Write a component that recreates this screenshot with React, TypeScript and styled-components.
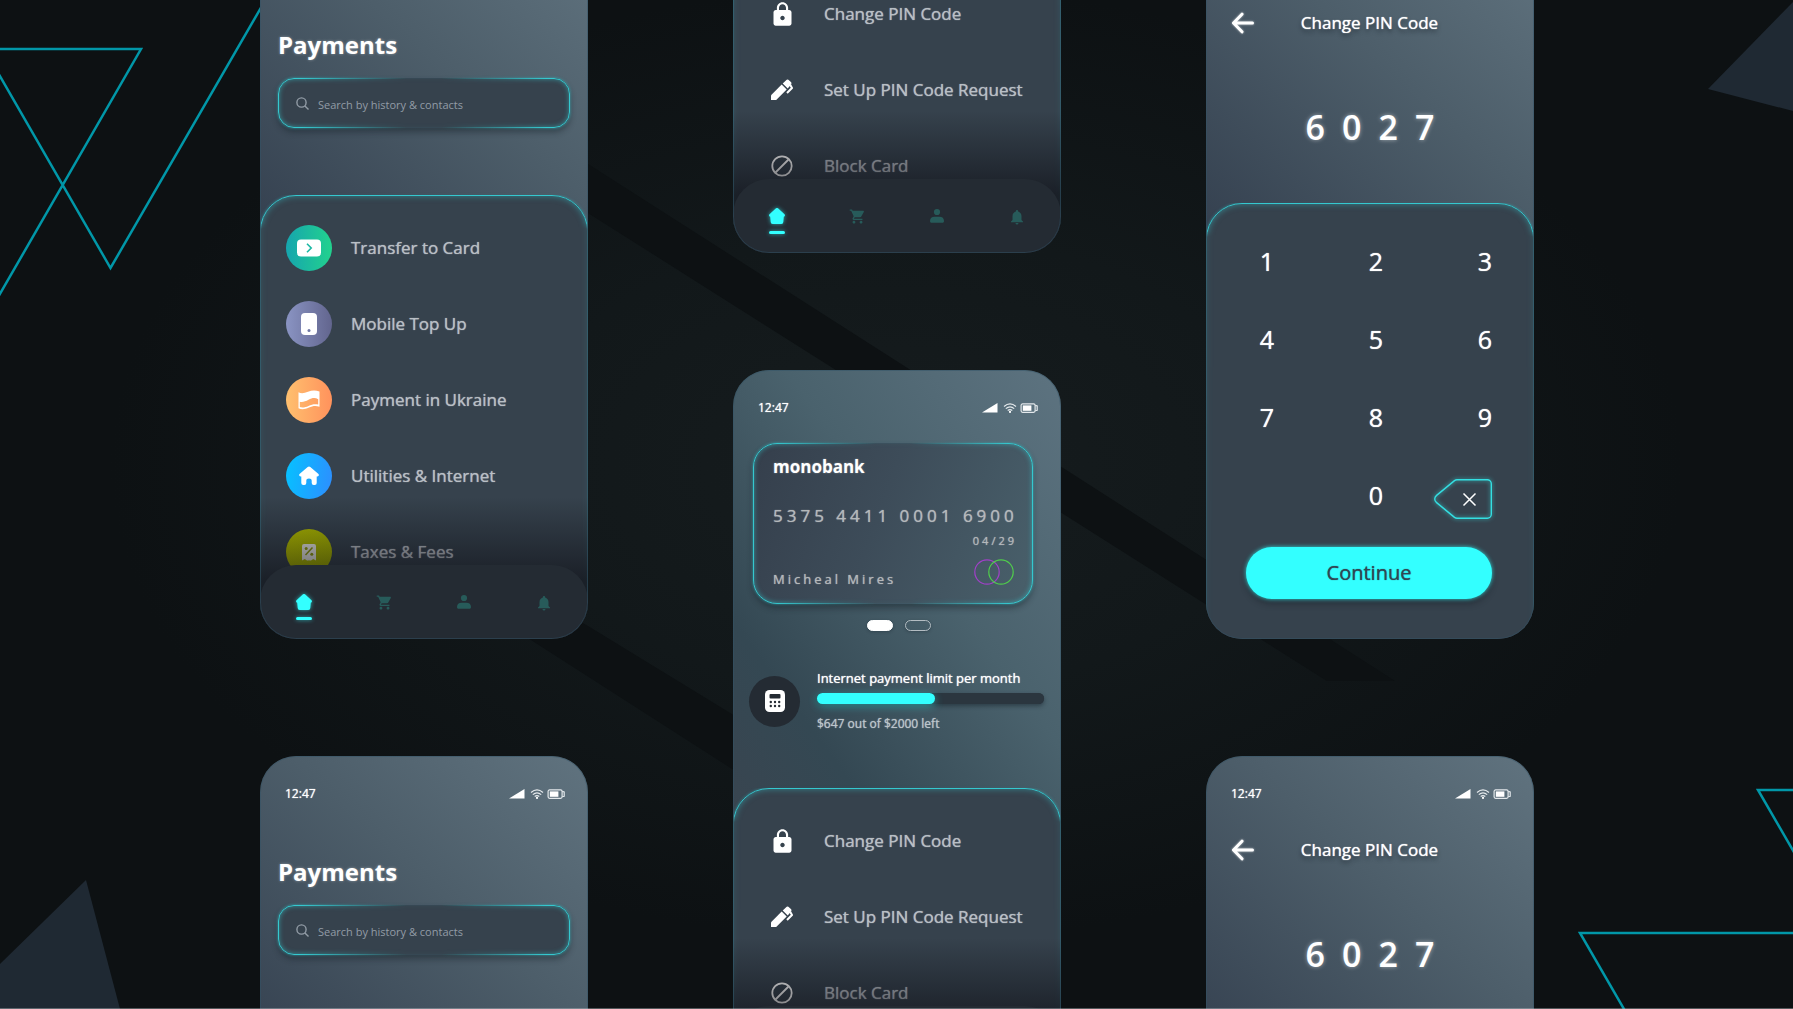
import React from "react";
import styled, { createGlobalStyle, css } from "styled-components";
import { MdLock, MdNotifications, MdShoppingCart } from "react-icons/md";

const theme = {
  cyan: "#33ffff",
  line: "#35c8cf",
  panel: "#36424d",
  nav: "#242b33",
  muted: "#b9bfc5",
  decor: "#0197a8",
  solid: "#1f2933",
};

const GlobalStyle = createGlobalStyle`
  * { box-sizing: border-box; }
  body {
    margin: 0;
    background: #0d1113;
    font-family: "Open Sans", "Noto Sans", sans-serif;
    color: #fff;
  }
  button, input { font: inherit; color: inherit; }
  h1, h2, p, ul { margin: 0; padding: 0; }
`;

/* ---------- board ---------- */

const Board = styled.main`
  position: relative;
  height: 100vh;
  overflow: hidden;
  background: radial-gradient(ellipse at 50% 46%, #161c1e 0%, #12181a 30%, #0d1113 62%);
  &::after {
    content: "";
    position: absolute;
    inset: auto 0 0;
    height: 1px;
    background: rgba(190, 195, 200, 0.4);
  }
`;

const Decor = styled.svg<{ $corner: "tl" | "tr" | "bl" | "br" | "mid" }>`
  position: absolute;
  overflow: visible;
  ${({ $corner }) =>
    ({
      tl: css`top: 0; left: 0;`,
      tr: css`top: 0; right: 0;`,
      bl: css`bottom: 0; left: 0;`,
      br: css`bottom: 0; right: 0;`,
      mid: css`top: 0; left: 0; width: 100%; height: 100%;`,
    })[$corner]}
`;

const Columns = styled.div`
  position: relative;
  display: flex;
  justify-content: center;
  gap: 145px;
  padding-left: 1px;
`;

const Column = styled.div<{ $lift: number }>`
  display: flex;
  flex-direction: column;
  gap: 117px;
  margin-top: ${({ $lift }) => -$lift}px;
`;

/* soft halo that gives regular text a medium weight */
const mediumText = css`
  font-weight: 400;
  text-shadow: 0 0 1px currentColor;
`;

/* ---------- phone ---------- */

const Phone = styled.section<{ $tone?: "slate" | "teal" }>`
  position: relative;
  display: flex;
  flex-direction: column;
  flex: none;
  width: 328px;
  height: 710px;
  overflow: hidden;
  border-radius: 36px;
  background: ${({ $tone }) =>
    $tone === "teal"
      ? "linear-gradient(to top right, #394550 0%, #344853 22%, #4a626d 58%, #5d7380 100%) top / 100% 450px no-repeat, #36424d"
      : "linear-gradient(to top right, #354150 0%, #4d5e6a 55%, #60737f 100%) top / 100% 300px no-repeat, #36424d"};
  &::after {
    content: "";
    position: absolute;
    inset: 0;
    border: 1px solid rgba(50, 84, 104, 0.5);
    border-radius: inherit;
    pointer-events: none;
  }
`;

const StatusBar = styled.div`
  display: flex;
  align-items: center;
  justify-content: space-between;
  height: 16px;
  margin-top: 30px;
  padding: 0 23px 0 25px;
  font-size: 12px;
  line-height: 16px;
  ${mediumText}
`;

const StatusIcons = styled.svg`
  display: block;
`;

const Panel = styled.div`
  position: relative;
  flex: 1;
  padding-top: 30px;
  border-radius: 36px 36px 0 0;
  background: ${theme.panel};
  &::before {
    content: "";
    position: absolute;
    inset: 0 0 -40px;
    border: 1px solid ${theme.line};
    border-radius: inherit;
    box-shadow: inset 0 0 6px rgba(53, 200, 207, 0.5), 0 0 3px rgba(53, 200, 207, 0.5);
    mask: linear-gradient(#000 28px, rgba(0, 0, 0, 0.3) 34px, rgba(0, 0, 0, 0.12)) no-clip;
    pointer-events: none;
  }
`;

const Fade = styled.div`
  position: absolute;
  inset: auto 0 0;
  height: 142px;
  background: linear-gradient(rgba(8, 8, 14, 0), rgba(8, 8, 14, 0.6) 84px);
  pointer-events: none;
`;

const glowFrame = css`
  position: relative;
  box-shadow: 0 4px 6px rgba(20, 28, 36, 0.45);
  &::before {
    content: "";
    position: absolute;
    inset: 0;
    border: 1px solid ${theme.line};
    border-radius: inherit;
    box-shadow: inset 0 0 5px rgba(53, 200, 207, 0.6), 0 0 3px rgba(53, 200, 207, 0.7);
    mask: linear-gradient(to right, #000 8%, rgba(0, 0, 0, 0.05) 44%, rgba(0, 0, 0, 0.05) 56%, #000 92%) no-clip;
    pointer-events: none;
  }
`;

/* ---------- menu ---------- */

const MenuList = styled.ul`
  display: flex;
  flex-direction: column;
  gap: 30px;
  list-style: none;
`;

const MenuButton = styled.button`
  display: flex;
  align-items: center;
  gap: 19px;
  width: 100%;
  height: 46px;
  padding: 0 0 0 26px;
  border: 0;
  background: none;
  color: ${theme.muted};
  font-size: 17px;
  line-height: 24px;
  ${mediumText}
  text-align: left;
  white-space: nowrap;
  cursor: pointer;
`;

const IconDisc = styled.span<{ $fill?: string }>`
  display: grid;
  place-items: center;
  flex: none;
  width: 46px;
  height: 46px;
  border-radius: 50%;
  background: ${({ $fill }) => $fill ?? "none"};
  color: #fff;
`;

const TabBar = styled.nav`
  position: absolute;
  inset: auto 0 0;
  display: flex;
  justify-content: space-between;
  height: 74px;
  padding: 29px 36px 0;
  border-radius: 36px;
  background: ${theme.nav};
`;

const Tab = styled.a<{ $active?: boolean }>`
  display: flex;
  flex-direction: column;
  align-items: center;
  gap: 7px;
  width: 16px;
  height: 26px;
  color: ${({ $active }) => ($active ? theme.cyan : "#275b5a")};
  filter: ${({ $active }) => ($active ? "drop-shadow(0 0 2px rgba(51, 255, 255, 0.6))" : "none")};
  svg { display: block; flex: none; }
  &::after {
    content: "";
    display: ${({ $active }) => ($active ? "block" : "none")};
    flex: none;
    width: 16px;
    height: 3px;
    border-radius: 2px;
    background: currentColor;
  }
`;

/* ---------- payments ---------- */

const PaymentsHeader = styled.header`
  height: 220px;
  padding: 53px 18px 0;
`;

const PageTitle = styled.h1`
  font-size: 24px;
  line-height: 34px;
  font-weight: 700;
  text-shadow: 0 0 3px rgba(255, 255, 255, 0.4);
`;

const SearchBox = styled.label`
  ${glowFrame}
  display: flex;
  align-items: center;
  gap: 9px;
  height: 50px;
  margin-top: 16px;
  padding: 0 18px;
  border-radius: 16px;
  background: ${theme.panel};
  color: #929ca6;
  svg { flex: none; }
`;

const SearchInput = styled.input`
  flex: 1;
  min-width: 0;
  padding: 3px 0 0;
  border: 0;
  outline: 0;
  background: none;
  font-size: 11px;
  line-height: 16px;
  &::placeholder { color: #929ca6; opacity: 1; }
`;

/* ---------- card ---------- */

const CardHeader = styled.header`
  height: 372px;
  padding: 27px 17px 0 16px;
`;

const BankCard = styled.article`
  ${glowFrame}
  display: grid;
  grid-template-columns: 1fr auto;
  grid-template-rows: 43px 34px 22px 1fr;
  height: 161px;
  margin: 0 11px 0 4px;
  padding: 10px 16px 15px 20px;
  border-radius: 24px;
  background: linear-gradient(110deg, #353f4c 0%, #3d4c59 45%, #49606b 100%);
`;

const BankName = styled.h2`
  grid-column: 1 / -1;
  font-size: 17px;
  line-height: 28px;
  font-weight: 700;
  text-shadow: 0 0 2px rgba(255, 255, 255, 0.4);
`;

const CardNumber = styled.p`
  grid-column: 1 / -1;
  color: #b4b8bb;
  font-size: 17px;
  line-height: 40px;
  letter-spacing: 4px;
  white-space: nowrap;
  ${mediumText}
`;

const Expiry = styled.p`
  grid-column: 2;
  justify-self: end;
  align-self: center;
  color: #b4b8bb;
  font-size: 11px;
  line-height: 16px;
  letter-spacing: 3px;
  ${mediumText}
`;

const Holder = styled.p`
  grid-row: 4;
  align-self: end;
  color: #b4b8bb;
  font-size: 13px;
  line-height: 20px;
  letter-spacing: 3px;
  ${mediumText}
`;

const Rings = styled.svg`
  grid-row: 4;
  align-self: end;
  justify-self: end;
  margin: 0 3px 4px 0;
`;

const Pager = styled.div`
  display: flex;
  justify-content: center;
  gap: 12px;
  margin-top: 16px;
  padding-left: 4px;
`;

const PageDot = styled.button<{ $active?: boolean }>`
  width: 26px;
  height: 11px;
  padding: 0;
  border: 1px solid ${({ $active }) => ($active ? "#fff" : "#b3bcc2")};
  border-radius: 6px;
  background: ${({ $active }) => ($active ? "#fff" : "transparent")};
  box-shadow: 0 1px 3px rgba(20, 30, 40, 0.3);
  cursor: pointer;
`;

const Limit = styled.div`
  display: flex;
  align-items: center;
  gap: 17px;
  margin-top: 38px;
`;

const LimitDisc = styled.span`
  display: grid;
  place-items: center;
  flex: none;
  width: 51px;
  height: 51px;
  border-radius: 50%;
  background: ${theme.nav};
`;

const LimitBody = styled.label`
  display: flex;
  flex: 1;
  flex-direction: column;
  font-size: 13px;
  line-height: 18px;
  ${mediumText}
  white-space: nowrap;
`;

const LimitBar = styled.progress`
  display: block;
  width: 100%;
  height: 11px;
  margin: 6px 0 11px;
  border: 0;
  border-radius: 6px;
  appearance: none;
  background: #2b363f;
  box-shadow: 0 2px 4px rgba(20, 30, 38, 0.5);
  &::-webkit-progress-bar {
    border-radius: 6px;
    background: #2b363f;
  }
  &::-webkit-progress-value {
    border-radius: 6px;
    background: ${theme.cyan};
    box-shadow: 0 2px 8px rgba(51, 255, 255, 0.45);
  }
`;

const LimitNote = styled.span`
  color: #bcc5cb;
  font-size: 12px;
`;

/* ---------- pin ---------- */

const PinHeader = styled.header`
  height: 228px;
  padding-top: 35px;
`;

const PinTitleRow = styled.div`
  display: grid;
  grid-template-columns: 24px 1fr 24px;
  align-items: center;
  height: 26px;
  padding: 0 26px 0 25px;
`;

const BackButton = styled.button`
  display: grid;
  padding: 0;
  border: 0;
  background: none;
  filter: drop-shadow(0 0 1px rgba(255, 255, 255, 0.6));
  cursor: pointer;
`;

const PinTitle = styled.h2`
  font-size: 17px;
  line-height: 26px;
  font-weight: 400;
  text-align: center;
  text-shadow: 0 0 1px currentColor, 0 3px 4px rgba(20, 28, 36, 0.6);
`;

const PinDigits = styled.output`
  display: flex;
  justify-content: center;
  gap: 17px;
  margin-top: 66px;
  font-size: 34px;
  line-height: 50px;
  font-weight: 600;
  text-shadow: 0 0 4px rgba(255, 255, 255, 0.5);
`;

const Keypad = styled.div`
  display: grid;
  grid-template-columns: repeat(3, 58px);
  column-gap: 51px;
  row-gap: 38px;
  padding: 8px 42px 0 10px;
`;

const Key = styled.button<{ $column?: number }>`
  grid-column: ${({ $column }) => $column ?? "auto"};
  height: 40px;
  padding: 0;
  border: 0;
  background: none;
  font-size: 25px;
  line-height: 40px;
  ${mediumText}
  text-align: right;
  cursor: pointer;
  svg { display: block; margin-top: 4px; overflow: visible; }
`;

const Continue = styled.button`
  display: block;
  width: calc(100% - 82px);
  height: 52px;
  margin: 32px 42px 0 40px;
  padding: 0;
  border: 0;
  border-radius: 26px;
  background: ${theme.cyan};
  box-shadow: 0 0 4px rgba(51, 255, 255, 0.8), 0 5px 6px rgba(20, 26, 32, 0.4);
  color: #2f4754;
  font-size: 20px;
  line-height: 52px;
  ${mediumText}
  cursor: pointer;
`;

/* ---------- icons ---------- */

const CardIcon = () => (
  <svg width="24" height="18" viewBox="0 0 24 18">
    <rect x="0" y="0.5" width="24" height="17" rx="4" fill="#fff" />
    <path d="M10 4.800 14.200 9 10 13.200" fill="none" stroke="#1cb8a4" strokeWidth="1.600" />
  </svg>
);
const MobileIcon = () => (
  <svg width="16" height="22" viewBox="0 0 16 22">
    <rect width="16" height="22" rx="4" fill="#fff" />
    <circle cx="8" cy="17.500" r="1.500" fill="#6f77a5" />
  </svg>
);
const FlagIcon = () => (
  <svg width="22" height="20" viewBox="0 0 22 20">
    <path
      fill="#fff"
      fillRule="evenodd"
      d="M.5 2.2C3 3.6 6 3.4 10 1.8 14 .2 17.500 0 21.500 1.600V16.800C17.500 15.400 14.500 16 11 17.600 7 19.400 3.500 19.600.5 18.300ZM1.800 11.800V17C4.500 17.800 7.500 17.300 10.500 15.900 14 14.300 17 13.800 20.200 14.600V9.200C17 7.400 14 7.800 10.500 9.800 7.500 11.500 4.500 12.500 1.800 11.800Z"
    />
  </svg>
);
const HouseIcon = () => (
  <svg width="20" height="20" viewBox="0 0 20 20">
    <path
      fill="#fff"
      d="M8.700 1.100a2 2 0 0 1 2.600 0l7.900 6.700c1.200 1 .6 2.600-.9 2.600h-.6v6.700a2 2 0 0 1-2 2h-1a2 2 0 0 1-2-2v-2.300c0-1.500-1-2.300-2.700-2.300s-2.700.8-2.700 2.300v2.300a2 2 0 0 1-2 2h-1a2 2 0 0 1-2-2v-6.700h-.6c-1.500 0-2.100-1.600-.9-2.600Z"
    />
  </svg>
);
const TaxIcon = () => (
  <svg width="14" height="17" viewBox="0 0 14 17">
    <path fill="#e9e9e4" d="M2 0h10a2 2 0 0 1 2 2v14.500l-2.800-1.600L9 16.500H7.500L7 16l-.5.500H5l-2.200-1.600L0 16.500V2a2 2 0 0 1 2-2Z" />
    <path d="m3.500 11 7-7.500" stroke="#8f9a10" strokeWidth="1.500" />
    <circle cx="4.200" cy="4.500" r="1.500" fill="#8f9a10" />
    <circle cx="9.800" cy="10.200" r="1.500" fill="#8f9a10" />
  </svg>
);
const PenIcon = () => (
  <svg width="22" height="22" viewBox="0 0 22 22">
    <path fill="#fff" d="M0 16.300 10.700 5.600l5 5L5.200 21H0Z" />
    <path fill="#fff" d="m11.700 4.600 3.200-3.200a2.300 2.300 0 0 1 3.300 0l1.700 1.700c.7.700.7 1.600.2 2.400l-3.400 4Z" />
    <path d="m19.300 6 1.700 3-5 5" fill="none" stroke="#fff" strokeWidth="2" strokeLinejoin="round" />
  </svg>
);
const BlockIcon = () => (
  <svg width="22" height="22" viewBox="0 0 22 22" fill="none" stroke="#fff" strokeWidth="1.800">
    <circle cx="11" cy="11" r="9.700" />
    <path d="m4.500 17.500 13-13" />
  </svg>
);
const CalculatorIcon = () => (
  <svg width="20" height="22" viewBox="0 0 20 22">
    <rect width="20" height="22" rx="4.500" fill="#fff" />
    <rect x="4.500" y="4" width="11" height="4.500" rx="1" fill={theme.nav} />
    {[12, 16].map((y) =>
      [5.8, 10, 14.2].map((x) => <circle key={`${x}-${y}`} cx={x} cy={y} r="1.200" fill={theme.nav} />)
    )}
  </svg>
);
const TabHome = () => (
  <svg width="16" height="16" viewBox="0 0 16 16">
    <path fill="currentColor" d="M6.700.6a1.800 1.800 0 0 1 2.600 0l6.200 5.700c.8.800.5 2.200-.7 2.500l-.5 5.200a2 2 0 0 1-2 2H3.700a2 2 0 0 1-2-2l-.5-5.200C0 8.500-.3 7.100.5 6.300Z" />
  </svg>
);
const TabPerson = () => (
  <svg width="14" height="16" viewBox="0 0 14 16">
    <circle cx="7" cy="4" r="3.100" fill="currentColor" />
    <path fill="currentColor" d="M0 13c0-2.800 1.800-4.300 4.500-4.300h5C12.200 8.700 14 10.200 14 13c0 1.200-.6 1.800-1.700 1.800H1.700C.6 14.800 0 14.200 0 13Z" />
  </svg>
);
const SearchIcon = () => (
  <svg width="13" height="13" viewBox="0 0 13 13" fill="none" stroke="currentColor" strokeWidth="1.400">
    <circle cx="5.500" cy="5.500" r="4.600" />
    <path d="m8.900 8.900 3.600 3.600" />
  </svg>
);

/* ---------- screens ---------- */

const Status = () => (
  <StatusBar>
    <span>12:47</span>
    <StatusIcons width="56" height="10" viewBox="0 0 56 10" aria-label="Signal, Wi-Fi and battery">
      <path d="M0 9.500 15.500 0v9.500Z" fill="#fff" />
      <g fill="none" stroke="#e3e8eb" strokeWidth="1.200">
        <path d="M22 3.500q6-5.200 12 0M23.800 5.600q4.200-3.600 8.400 0M25.700 7.500q2.300-1.800 4.600 0" />
        <rect x="39.100" y="0.900" width="14" height="8.400" rx="1.500" />
        <path d="M53.200 2.400 55.200 3v4.200l-2 .6" />
      </g>
      <circle cx="28" cy="8.900" r="1.100" fill="#fff" />
      <rect x="40.800" y="2.400" width="8.600" height="5.400" fill="#fff" />
    </StatusIcons>
  </StatusBar>
);

const Tabs = () => (
  <TabBar aria-label="Main">
    <Tab href="#home" aria-label="Home" $active><TabHome /></Tab>
    <Tab href="#shop" aria-label="Shop"><MdShoppingCart size={17} /></Tab>
    <Tab href="#profile" aria-label="Profile"><TabPerson /></Tab>
    <Tab href="#alerts" aria-label="Alerts"><MdNotifications size={18} /></Tab>
  </TabBar>
);

type Item = { label: string; icon: React.ReactNode; fill?: string };

const paymentItems: Item[] = [
  { label: "Transfer to Card", icon: <CardIcon />, fill: "linear-gradient(90deg, #16a5ae, #22d28e)" },
  { label: "Mobile Top Up", icon: <MobileIcon />, fill: "linear-gradient(90deg, #8a94c3, #62658e)" },
  { label: "Payment in Ukraine", icon: <FlagIcon />, fill: "linear-gradient(90deg, #ffc06f, #ff925c)" },
  { label: "Utilities & Internet", icon: <HouseIcon />, fill: "linear-gradient(100deg, #05c3ff, #2e8dff)" },
  { label: "Taxes & Fees", icon: <TaxIcon />, fill: "linear-gradient(120deg, #b4be00, #a3b000)" },
];

const cardItems: Item[] = [
  { label: "Change PIN Code", icon: <MdLock size={27} /> },
  { label: "Set Up PIN Code Request", icon: <PenIcon /> },
  { label: "Block Card", icon: <BlockIcon /> },
];

const Menu = ({ items }: { items: Item[] }) => (
  <MenuList>
    {items.map(({ label, icon, fill }) => (
      <li key={label}>
        <MenuButton type="button">
          <IconDisc $fill={fill}>{icon}</IconDisc>
          {label}
        </MenuButton>
      </li>
    ))}
  </MenuList>
);

const PaymentsScreen = () => (
  <Phone>
    <Status />
    <PaymentsHeader>
      <PageTitle>Payments</PageTitle>
      <SearchBox>
        <SearchIcon />
        <SearchInput type="search" placeholder="Search by history & contacts" aria-label="Search by history & contacts" />
      </SearchBox>
    </PaymentsHeader>
    <Panel>
      <Menu items={paymentItems} />
    </Panel>
    <Fade />
    <Tabs />
  </Phone>
);

const CardScreen = () => (
  <Phone $tone="teal">
    <Status />
    <CardHeader>
      <BankCard>
        <BankName>monobank</BankName>
        <CardNumber>5375 4411 0001 6900</CardNumber>
        <Expiry>04/29</Expiry>
        <Holder>Micheal Mires</Holder>
        <Rings width="40" height="26" viewBox="0 0 40 26" fill="none" strokeWidth="1.200" aria-hidden="true">
          <circle cx="13" cy="13" r="12.200" stroke="#a040c8" />
          <circle cx="27" cy="13" r="12.200" stroke="#50cc4c" />
        </Rings>
      </BankCard>
      <Pager>
        <PageDot type="button" aria-label="Card 1" $active />
        <PageDot type="button" aria-label="Card 2" />
      </Pager>
      <Limit>
        <LimitDisc><CalculatorIcon /></LimitDisc>
        <LimitBody>
          Internet payment limit per month
          <LimitBar value={52} max={100} />
          <LimitNote>$647 out of $2000 left</LimitNote>
        </LimitBody>
      </Limit>
    </CardHeader>
    <Panel>
      <Menu items={cardItems} />
    </Panel>
    <Fade />
    <Tabs />
  </Phone>
);

const PinScreen = () => (
  <Phone>
    <Status />
    <PinHeader>
      <PinTitleRow>
        <BackButton type="button" aria-label="Back">
          <svg width="24" height="22" viewBox="0 0 24 22" fill="none" stroke="#fff" strokeWidth="3" strokeLinecap="round" strokeLinejoin="round">
            <path d="M21.500 11H3M11 2.200 2.500 11l8.500 8.800" />
          </svg>
        </BackButton>
        <PinTitle>Change PIN Code</PinTitle>
      </PinTitleRow>
      <PinDigits>
        {["6", "0", "2", "7"].map((digit, i) => (
          <span key={i}>{digit}</span>
        ))}
      </PinDigits>
    </PinHeader>
    <Panel>
      <Keypad>
        {["1", "2", "3", "4", "5", "6", "7", "8", "9"].map((digit) => (
          <Key key={digit} type="button">{digit}</Key>
        ))}
        <Key type="button" $column={2}>0</Key>
        <Key type="button" aria-label="Delete">
          <svg width="58" height="40" viewBox="0 0 58 40" fill="none">
            <path
              d="M23 .7h30.300a4 4 0 0 1 4 4v30.600a4 4 0 0 1-4 4H23c-1 0-1.700-.3-2.500-.9L2.600 23.600c-2.500-2-2.500-5.200 0-7.200L20.500 1.600c.8-.6 1.500-.9 2.500-.9Z"
              stroke="#34dfe2"
              strokeWidth="1.400"
              filter="drop-shadow(0 0 2px rgba(51,255,255,.7))"
            />
            <path d="m29.500 14.500 12 12m0-12-12 12" stroke="#fff" strokeWidth="1.500" />
          </svg>
        </Key>
      </Keypad>
      <Continue type="button">Continue</Continue>
    </Panel>
  </Phone>
);

export default function App() {
  return (
    <>
      <GlobalStyle />
      <Board>
        <Decor $corner="mid" viewBox="0 0 1793 1009" preserveAspectRatio="xMidYMid slice" fill="#0d1113" aria-hidden="true">
          <path d="M470 89 588 164 909 369 1395 681H1327L588 213 400 94Z" />
          <path d="M260 440 588 626 740 719V774L531 640 260 468Z" />
        </Decor>
        <Decor $corner="tl" width="262" height="300" fill="none" stroke={theme.decor} strokeWidth="2.500" aria-hidden="true">
          <path d="M-60 49H141L-60 398M-60-28 110.500 268 266-1" />
        </Decor>
        <Decor $corner="tr" width="85" height="112" fill={theme.solid} aria-hidden="true">
          <path d="M85 2 0 89 85 111Z" />
        </Decor>
        <Decor $corner="bl" width="120" height="129" fill={theme.solid} aria-hidden="true">
          <path d="M0 84 86 0 120 129H0Z" />
        </Decor>
        <Decor $corner="br" width="214" height="220" fill="none" stroke={theme.decor} strokeWidth="2.500" aria-hidden="true">
          <path d="M234 1H179L234 96M234 144H1L60 246" />
        </Decor>
        <Columns>
          <Column $lift={71}>
            <PaymentsScreen />
            <PaymentsScreen />
          </Column>
          <Column $lift={457}>
            <CardScreen />
            <CardScreen />
          </Column>
          <Column $lift={71}>
            <PinScreen />
            <PinScreen />
          </Column>
        </Columns>
      </Board>
    </>
  );
}
